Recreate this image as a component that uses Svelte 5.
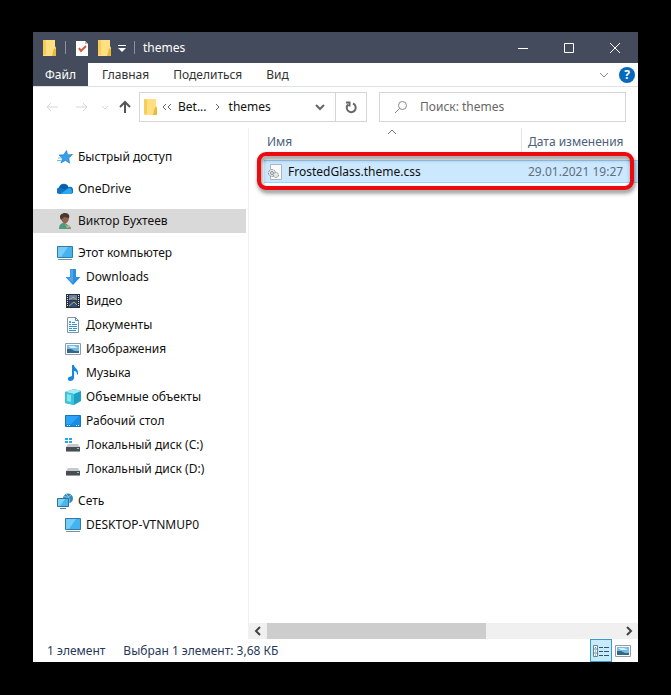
<script>
    let selected = $state("user");
    let view = $state("details");
    let query = $state("");

    const tabs = ["Главная", "Поделиться", "Вид"];

    const groups = [
        [{ id: "quick", label: "Быстрый доступ", icon: "star" }],
        [{ id: "onedrive", label: "OneDrive", icon: "cloud" }],
        [{ id: "user", label: "Виктор Бухтеев", icon: "user" }],
        [
            { id: "pc", label: "Этот компьютер", icon: "monitor" },
            { id: "downloads", label: "Downloads", icon: "download", child: true },
            { id: "video", label: "Видео", icon: "video", child: true },
            { id: "docs", label: "Документы", icon: "document", child: true },
            { id: "images", label: "Изображения", icon: "picture", child: true },
            { id: "music", label: "Музыка", icon: "music", child: true },
            { id: "objects", label: "Объемные объекты", icon: "cube", child: true },
            { id: "desktop", label: "Рабочий стол", icon: "desktop", child: true },
            { id: "c", label: "Локальный диск (C:)", icon: "system", child: true },
            { id: "d", label: "Локальный диск (D:)", icon: "disk", child: true },
        ],
        [
            { id: "network", label: "Сеть", icon: "network" },
            { id: "host", label: "DESKTOP-VTNMUP0", icon: "monitor", child: true },
        ],
    ];

    const files = [{ name: "FrostedGlass.theme.css", date: "29.01.2021 19:27" }];
</script>

{#snippet icon(name)}
    <svg class="icon" viewBox="0 0 16 16" aria-hidden="true">
        {#if name === "folder"}
            <path d="M2 0h12v6l1 2v8H2z" fill="#ffe08a" />
            <path d="M2 0h2l1 1v14H2z" fill="#f7cd58" />
            <path d="M5 1h8v14H5z" fill="#ffe080" />
            <path d="M13 8l2 1v7h-4z" fill="#eab93c" />
        {:else if name === "check"}
            <path d="M2 1h9l3 3v12H2z" fill="#fff" />
            <path d="M11 1v3h3z" fill="#b8bcc6" />
            <path d="M5 8l2 3 5-5" fill="none" stroke="#d9573b" stroke-width="2" />
        {:else if name === "star"}
            <path d="M9.5 1.5l1.2 4.300 4.800-.3-3.700 3.500.8 5.200-4.100-2.700-4.500 2.500 1.500-4.500L2 6l4.700-.2z" fill="#389fe6" stroke="#1679c5" stroke-width=".6" />
            <path d="M1 9h4M0 11.5h4" stroke="#6bbdef" />
        {:else if name === "cloud"}
            <path d="M2.5 13A3.3 3.3 0 0 1 2 6.500 5 5 0 0 1 11.5 6 3.700 3.700 0 0 1 14 13z" fill="#1474c4" />
            <path d="M3.5 13l8-6A3.5 3.5 0 0 1 14 13z" fill="#2da8ef" />
            <path d="M2 6.800A5 5 0 0 1 9 4l2.400 2.500-3 2z" fill="#075fac" />
        {:else if name === "user"}
            <path d="M2 16c0-4 2-6 4.500-6l3 1 4 3 .5 2z" fill="#4c9b7c" />
            <path d="M4 5c0-6 8-6 8 0 0 3-2 5-4 6-2-1-4-3-4-6" fill="#94634b" />
            <path d="M4 7C1 2 5 0 8 0c4 0 5 3 4 5L7 4z" fill="#493832" />
            <path d="M8 11l2 2 3-1v2l-3 1z" fill="#d7ad82" />
        {:else if name === "monitor"}
            <path d="M.5 1.5h15v11H.5z" fill="#44b3ef" stroke="#327ba9" />
            <path d="M1 2h10L4 12H1z" fill="#75cef8" />
            <path d="M1 14.5h14" stroke="#7392a5" />
        {:else if name === "download"}
            <path d="M5 0h6v8h4.500L8 16 .5 8H5z" fill="#2d8ee0" />
            <path d="M5.5.5H8V14L2 8.500h3.500z" fill="#4ea6ed" />
        {:else if name === "video"}
            <path d="M1 1h14v14H1z" fill="#293240" />
            <path d="M4 2h8v5H4z" fill="#6482a8" />
            <path d="M4 8h8v6H4z" fill="#304e79" />
            <path d="M4 7l4-3 4 3M4 13l5-4 3 3" fill="none" stroke="#c1a660" />
            <path d="M2.5 2v12M13.5 2v12" stroke="#dce4ed" stroke-dasharray="1 1" />
        {:else if name === "document"}
            <path d="M2.5.5h8l3 3v12h-11z" fill="#f9fcff" stroke="#8293a1" />
            <path d="M10.5.5v3h3M7 5.500h3M4 7.500h2M7 7.500h5M4 9.500h8M4 11.500h3M8 11.500h4M4 13.500h7" fill="none" stroke="#3693cc" />
            <path d="M4 4h2v2H4z" fill="#50a5d8" />
        {:else if name === "picture"}
            <path d="M.5 2.5h15v11H.5z" fill="#fff" stroke="#909ca5" />
            <path d="M2 4h12v8H2z" fill="#77bce8" />
            <path d="M2 8h4l4 2h4v2H2z" fill="#316987" />
            <path d="M3 5h6l4 2H6z" fill="#d6f0ff" />
        {:else if name === "music"}
            <path d="M7 0h2c0 3 5 4 4 9l-1 1c0-3-1-4-3-4v7c0 2-2 3-4 3s-3-3-1-4l3-1z" fill="#1688df" />
        {:else if name === "cube"}
            <path d="M0 3l9-3 7 2v10l-7 4-9-2z" fill="#1e9fc5" />
            <path d="M0 3l9-3 7 2-7 3z" fill="#a2edf4" />
            <path d="M0 3l9 2v11l-9-2z" fill="#3bc5da" />
            <path d="M2 5l4 1v7l-4-1z" fill="#86e5ed" />
        {:else if name === "desktop"}
            <path d="M.5 2.5h15v11H.5z" fill="#168ce4" stroke="#1374bf" />
            <path d="M1 3h13L6 11H1z" fill="#2ba3f6" />
            <path d="M2 12.5h1m1 0h1m6 0h1m1 0h1" stroke="#dcf3ff" />
        {:else if name === "system" || name === "disk"}
            <path d="M3 7h10l2 3H1z" fill="#c7cacc" />
            <path d="M1 10h14v5H1z" fill="#494c50" />
            <path d="M1 14.5h14" stroke="#999da0" />
            <path d="M12 11.5h2" stroke="#65e1bd" />
            {#if name === "system"}
                <path d="M0 1h3v2H0zm4 0h3v2H4zM0 4h3v2H0zm4 0h3v2H4z" fill="#25a9e6" />
            {/if}
        {:else if name === "network"}
            <circle cx="11" cy="5.5" r="5" fill="#3689b9" />
            <path d="M7 3c3 2 5 1 7-1M9 1c3 3 4 6 3 9" fill="none" stroke="#8bcbe9" />
            <path d="M.5 5.5h11v8H.5z" fill="#4db5e8" stroke="#2773a2" />
            <path d="M1 6h7l-5 7H1z" fill="#80d3f5" />
            <path d="M3 15.5h6" stroke="#547e98" />
        {:else if name === "css"}
            <path d="M3.5.5h11v15h-11z" fill="#fafafa" stroke="#adb5bb" />
            <circle cx="5" cy="9" r="3.5" fill="#e4e7e8" stroke="#808a90" stroke-dasharray="2 1" />
            <circle cx="5" cy="9" r="1.5" fill="none" stroke="#89949a" />
            <circle cx="9" cy="11" r="2.5" fill="#e4e7e8" stroke="#89949a" stroke-dasharray="2 1" />
        {:else if name === "details"}
            <path d="M.5 2.5h4v11h-4zM.5 6h4M.5 10h4M2 4.500h1M2 8h1M2 12h1" fill="#fff" stroke="#63849a" />
            <path d="M6 4.500h4m1 0h5M6 8.500h4m1 0h5M6 12.500h4m1 0h5" stroke="#31566e" />
        {/if}
    </svg>
{/snippet}

{#snippet glyph(d)}
    <svg class="glyph" viewBox="0 0 14 14" aria-hidden="true"><path {d} /></svg>
{/snippet}

<main class="stage">
    <div class="window">
        <header class="titlebar">
            {@render icon("folder")}
            <i class="sep"></i>
            <button aria-label="Свойства">{@render icon("check")}</button>
            <button aria-label="Новая папка">{@render icon("folder")}</button>
            <button class="quick" aria-label="Настройка панели">
                <svg viewBox="0 0 8 8"><path d="M0 1.5h8" /><path class="fill" d="M0 4h8L4 8z" /></svg>
            </button>
            <i class="sep"></i>
            <h1>themes</h1>
            <div class="controls">
                <button aria-label="Свернуть">{@render glyph("M2 7.5h10")}</button>
                <button aria-label="Развернуть">{@render glyph("M2.5 2.5h9v9h-9z")}</button>
                <button aria-label="Закрыть">{@render glyph("M2 2l10 10M12 2L2 12")}</button>
            </div>
        </header>

        <nav class="ribbon">
            <button class="file">Файл</button>
            {#each tabs as tab}
                <button>{tab}</button>
            {/each}
            <div class="ribbon-end">
                <button class="expand" aria-label="Развернуть ленту">{@render glyph("M3 5l4 4 4-4")}</button>
                <button class="help" aria-label="Справка">?</button>
            </div>
        </nav>

        <div class="toolbar">
            <div class="history">
                <button class="off" aria-label="Назад">{@render glyph("M13 7H2M6 3L2 7l4 4")}</button>
                <button class="off" aria-label="Вперед">{@render glyph("M1 7h11M8 3l4 4-4 4")}</button>
                <button class="off recent" aria-label="Последние">{@render glyph("M4 6l3 3 3-3")}</button>
                <button class="up" aria-label="Вверх">{@render glyph("M7 13V2M2 7l5-5 5 5")}</button>
            </div>
            <div class="address">
                {@render icon("folder")}
                <button aria-label="Ранее">{@render glyph("M6 4L3 7l3 3M11 4L8 7l3 3")}</button>
                <button class="crumb">Bet...</button>
                {@render glyph("M5 4l3 3-3 3")}
                <button class="crumb">themes</button>
                <button class="drop" aria-label="Предыдущие расположения">{@render glyph("M3 5l4 4 4-4")}</button>
                <button class="refresh" aria-label="Обновить">{@render glyph("M9 3.5a4.5 4.5 0 1 1-5 1M2 2.5h3.5v4")}</button>
            </div>
            <label class="search">
                <svg class="glyph" viewBox="0 0 14 14" aria-hidden="true">
                    <circle cx="8.5" cy="5.5" r="4" />
                    <path d="M5.5 8.5L1 13" />
                </svg>
                <input type="search" placeholder="Поиск: themes" aria-label="Поиск" bind:value={query} />
            </label>
        </div>

        <div class="content">
            <nav class="tree">
                {#each groups as group}
                    <ul>
                        {#each group as item}
                            <li>
                                <a
                                    href={"#" + item.id}
                                    class:child={item.child}
                                    class:active={selected === item.id}
                                    onclick={() => (selected = item.id)}
                                >
                                    {@render icon(item.icon)}
                                    {item.label}
                                </a>
                            </li>
                        {/each}
                    </ul>
                {/each}
            </nav>

            <section class="files">
                <div class="list">
                    <table>
                        <thead>
                            <tr>
                                <th class="name">
                                    <button>Имя</button>
                                    <span class="sort">{@render glyph("M3 9l4-4 4 4")}</span>
                                </th>
                                <th class="date"><button>Дата изменения</button></th>
                            </tr>
                        </thead>
                        <tbody>
                            {#each files as file}
                                <tr>
                                    <td><span class="filename">{@render icon("css")}{file.name}</span></td>
                                    <td class="date">{file.date}</td>
                                </tr>
                            {/each}
                        </tbody>
                    </table>
                    <div class="highlight"></div>
                </div>
                <div class="scrollbar">
                    <button aria-label="Влево">{@render glyph("M9 3L5 7l4 4")}</button>
                    <div class="track"><div class="thumb"></div></div>
                    <button aria-label="Вправо">{@render glyph("M5 3l4 4-4 4")}</button>
                </div>
            </section>
        </div>

        <footer class="status">
            <span>1 элемент</span>
            <span>Выбран 1 элемент: 3,68 КБ</span>
            <div class="views">
                <button class:on={view === "details"} aria-label="Таблица" onclick={() => (view = "details")}>
                    {@render icon("details")}
                </button>
                <button class:on={view === "large"} aria-label="Крупные значки" onclick={() => (view = "large")}>
                    {@render icon("picture")}
                </button>
            </div>
        </footer>
    </div>
</main>

<style>
    :global(body) {
        background: #000;
    }

    * {
        box-sizing: border-box;
    }

    .stage {
        display: flex;
        min-height: 100vh;
        padding: 32px 33px 33px;
        font: 12px/16px "Noto Sans", "Open Sans", sans-serif;
        color: #111;
    }

    .window {
        flex: 1;
        min-width: 0;
        display: flex;
        flex-direction: column;
        background: #fff;
    }

    button {
        display: flex;
        align-items: center;
        justify-content: center;
        padding: 0;
        border: 0;
        background: none;
        font: inherit;
        color: inherit;
    }

    .icon {
        flex: none;
        display: block;
        width: 16px;
        height: 16px;
    }

    .glyph {
        flex: none;
        display: block;
        width: 14px;
        height: 14px;
        fill: none;
        stroke: currentColor;
    }

    .titlebar {
        display: flex;
        align-items: center;
        height: 31px;
        padding-left: 8px;
        background: #444b5c;
        color: #fff;
    }

    .titlebar .sep {
        width: 1px;
        height: 13px;
        margin: 0 8px;
        background: #8b909c;
    }

    .titlebar > button + button {
        margin-left: 6px;
    }

    .quick svg {
        width: 8px;
        height: 8px;
        stroke: #fff;
    }

    .quick .fill {
        fill: #fff;
        stroke: none;
    }

    h1 {
        margin: 0;
        font-size: 12px;
        font-weight: 400;
    }

    .controls {
        display: flex;
        margin-left: auto;
        height: 100%;
    }

    .controls button {
        width: 46px;
    }

    .ribbon {
        display: flex;
        height: 24px;
        border-bottom: 1px solid #dfe1e3;
        color: #333;
    }

    .ribbon > button {
        padding: 0 12px;
    }

    .ribbon .file {
        background: #444b5c;
        color: #fff;
    }

    .ribbon .file + button {
        padding-left: 14px;
    }

    .ribbon-end {
        display: flex;
        align-items: center;
        gap: 8px;
        margin-left: auto;
        padding-right: 3px;
    }

    .expand {
        color: #888;
    }

    .help {
        width: 16px;
        height: 16px;
        border-radius: 50%;
        background: #0769bb;
        color: #fff;
        font-weight: 700;
    }

    .toolbar {
        display: grid;
        grid-template-columns: 106px 12fr 13fr;
        column-gap: 12px;
        padding: 5px 12px 0 0;
        height: 41px;
    }

    .history {
        display: flex;
        align-items: center;
        height: 30px;
        padding-left: 12px;
        margin-right: -12px;
        color: #555;
    }

    .history .off + .off {
        margin-left: 16px;
    }

    .history .off + .recent {
        margin-left: 9px;
    }

    .history .up {
        margin-left: 6px;
    }

    .history .glyph {
        stroke-width: 2;
    }

    .history .off {
        color: #d5d7da;
    }

    .history .off .glyph {
        stroke-width: 1;
    }

    .toolbar {
        grid-template-columns: 94px 12fr 13fr;
    }

    .address,
    .search {
        display: flex;
        align-items: center;
        min-width: 0;
        height: 30px;
        border: 1px solid #d5d5d5;
    }

    .address {
        padding-left: 2px;
        gap: 2px;
    }

    .address .glyph {
        color: #666;
    }

    .crumb {
        padding: 0 2px;
    }

    .address .drop {
        margin-left: auto;
        margin-right: 6px;
    }

    .address .drop .glyph,
    .address .refresh .glyph {
        stroke-width: 2;
    }

    .address .refresh {
        width: 31px;
        height: 100%;
        border-left: 1px solid #d5d5d5;
    }

    .search {
        padding-left: 14px;
        gap: 12px;
        color: #888;
    }

    .search input {
        flex: 1;
        min-width: 0;
        padding: 0;
        border: 0;
        outline: 0;
        background: none;
        font: inherit;
        color: #333;
    }

    .search input::placeholder {
        color: #666;
        opacity: 1;
    }

    .content {
        flex: 1;
        display: flex;
    }

    .tree {
        width: 216px;
        padding: 17px 2px 0 0;
        border-right: 1px solid #f0f0f0;
    }

    ul {
        margin: 0 0 8px;
        padding: 0;
        list-style: none;
    }

    .tree a {
        display: flex;
        align-items: center;
        gap: 5px;
        height: 24px;
        padding-left: 24px;
        color: inherit;
        text-decoration: none;
        white-space: nowrap;
    }

    .tree a.child {
        padding-left: 32px;
    }

    .tree a.active {
        background: #d9d9d9;
    }

    .files {
        flex: 1;
        min-width: 0;
        display: flex;
        flex-direction: column;
    }

    .list {
        position: relative;
        flex: 1;
        padding-left: 15px;
    }

    table {
        width: 100%;
        table-layout: fixed;
        border-collapse: collapse;
    }

    th {
        position: relative;
        padding: 0 0 7px;
        font-weight: 400;
        color: #4c607a;
    }

    th button {
        height: 25px;
        padding: 2px 3px 0;
    }

    th.date {
        width: 117px;
    }

    th.date button {
        padding-left: 6px;
        border-left: 1px solid #e3e3e3;
        white-space: nowrap;
    }

    .sort {
        position: absolute;
        top: -3px;
        left: calc(50% - 8px);
        color: #777;
    }

    td {
        height: 22px;
        padding: 0 3px;
        background: #cce8ff;
        border: solid #99d1ff;
        border-width: 1px 0;
    }

    td.date {
        padding-left: 7px;
        color: #5f6f7e;
        white-space: nowrap;
    }

    .filename {
        display: flex;
        align-items: center;
        gap: 5px;
    }

    .highlight {
        position: absolute;
        top: 24px;
        left: 8px;
        right: 4px;
        height: 38px;
        border: 4px solid #ec0a0f;
        border-radius: 9px;
        filter: drop-shadow(1px 3px 2px rgba(0, 0, 0, 0.5));
        pointer-events: none;
    }

    .scrollbar {
        display: flex;
        height: 16px;
        background: #f0f0f0;
        color: #444;
    }

    .scrollbar button {
        width: 18px;
    }

    .scrollbar .glyph {
        stroke-width: 2;
    }

    .track {
        flex: 1;
    }

    .thumb {
        width: 62%;
        height: 100%;
        background: #cdcdcd;
    }

    .status {
        display: flex;
        align-items: center;
        gap: 18px;
        height: 23px;
        padding-left: 14px;
        color: #26395b;
    }

    .views {
        display: flex;
        margin-left: auto;
        padding-right: 4px;
    }

    .views button {
        width: 22px;
        height: 23px;
        border: 1px solid transparent;
    }

    .views .on {
        border-color: #3a9bc9;
        background: #c8ebfc;
    }
</style>
